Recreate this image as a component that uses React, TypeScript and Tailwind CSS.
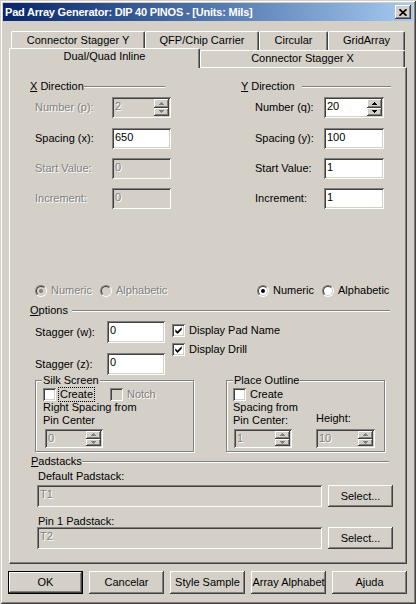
import { clsx } from 'clsx';

const raised = 'shadow-[inset_-1px_-1px_0_#404040,inset_1px_1px_0_#ffffff,inset_-2px_-2px_0_#808080]';
const sunken = 'shadow-[inset_1px_1px_0_#808080,inset_-1px_-1px_0_#ffffff,inset_2px_2px_0_#404040,inset_-2px_-2px_0_#d4d0c8]';
const etched = 'border border-[#808080] shadow-[inset_1px_1px_0_#ffffff,1px_1px_0_#ffffff]';
const grayText = 'text-[#808080] [text-shadow:1px_1px_0_#ffffff]';

function Arrow({ up, disabled }: { up?: boolean; disabled?: boolean }) {
  const fill = disabled ? '#808080' : '#000000';
  return (
    <svg width="5" height="3" viewBox="0 0 5 3" className="block" shapeRendering="crispEdges">
      {up ? (
        <>
          <rect x="2" y="0" width="1" height="1" fill={fill} />
          <rect x="1" y="1" width="3" height="1" fill={fill} />
          <rect x="0" y="2" width="5" height="1" fill={fill} />
        </>
      ) : (
        <>
          <rect x="0" y="0" width="5" height="1" fill={fill} />
          <rect x="1" y="1" width="3" height="1" fill={fill} />
          <rect x="2" y="2" width="1" height="1" fill={fill} />
        </>
      )}
    </svg>
  );
}

function Spin({ disabled }: { disabled?: boolean }) {
  return (
    <div className="mr-[2px] flex w-[15px] flex-col self-stretch py-[2px]">
      <div className={clsx('flex flex-1 items-center justify-center bg-[#d4d0c8]', raised)}>
        <Arrow up disabled={disabled} />
      </div>
      <div className={clsx('flex flex-1 items-center justify-center bg-[#d4d0c8]', raised)}>
        <Arrow disabled={disabled} />
      </div>
    </div>
  );
}

function TextBox({
  value,
  disabled,
  spin,
  className,
}: {
  value: string;
  disabled?: boolean;
  spin?: boolean;
  className: string;
}) {
  return (
    <div className={clsx('flex shrink-0', sunken, disabled ? 'bg-[#d4d0c8]' : 'bg-white', className)}>
      <span className={clsx('flex-1 pl-[3px] pt-[3px] leading-[13px]', disabled ? grayText : 'text-black')}>
        {value}
      </span>
      {spin && <Spin disabled={disabled} />}
    </div>
  );
}

function Check({ checked, disabled }: { checked?: boolean; disabled?: boolean }) {
  return (
    <span
      className={clsx(
        'flex h-[13px] w-[13px] shrink-0 items-center justify-center',
        sunken,
        disabled ? 'bg-[#d4d0c8]' : 'bg-white',
      )}
    >
      {checked && (
        <svg width="7" height="7" viewBox="0 0 7 7" className="block">
          <path d="M0.3 2.3 L2.5 4.5 L6.7 0.3 L6.7 2.8 L2.5 7 L0.3 4.8 Z" fill="#000000" />
        </svg>
      )}
    </span>
  );
}

function Radio({ checked, disabled }: { checked?: boolean; disabled?: boolean }) {
  return (
    <span className="flex h-[12px] w-[12px] shrink-0 rounded-full border border-t-[#808080] border-r-white border-b-white border-l-[#808080]">
      <span
        className={clsx(
          'flex flex-1 items-center justify-center rounded-full border border-t-[#404040] border-r-[#d4d0c8] border-b-[#d4d0c8] border-l-[#404040]',
          disabled ? 'bg-[#d4d0c8]' : 'bg-white',
        )}
      >
        {checked && <span className={clsx('h-[4px] w-[4px] rounded-full', disabled ? 'bg-[#808080]' : 'bg-black')} />}
      </span>
    </span>
  );
}

function Etch({ className }: { className?: string }) {
  return <div className={clsx('h-[2px] border-t border-b border-t-[#808080] border-b-white', className)} />;
}

function Btn({ label, className, def }: { label: string; className: string; def?: boolean }) {
  if (def) {
    return (
      <div className={clsx('flex border border-black', className)}>
        <div className={clsx('flex flex-1 items-center justify-center bg-[#d4d0c8]', raised)}>{label}</div>
      </div>
    );
  }
  return <div className={clsx('flex items-center justify-center bg-[#d4d0c8]', raised, className)}>{label}</div>;
}

function Tab({ label, className }: { label: string; className: string }) {
  return (
    <div
      className={clsx(
        'flex justify-center rounded-t-[2px] border-t border-r border-l border-t-white border-r-[#404040] border-l-white bg-[#d4d0c8] shadow-[inset_-1px_0_0_#808080]',
        className,
      )}
    >
      {label}
    </div>
  );
}

function Row({
  label,
  value,
  disabled,
  spin,
  labelClass,
  boxClass,
  className,
}: {
  label: string;
  value: string;
  disabled?: boolean;
  spin?: boolean;
  labelClass: string;
  boxClass: string;
  className?: string;
}) {
  return (
    <div className={clsx('flex items-center', className)}>
      <span className={clsx('leading-[13px]', labelClass, disabled && grayText)}>{label}</span>
      <TextBox value={value} disabled={disabled} spin={spin} className={boxClass} />
    </div>
  );
}

export default function App() {
  return (
    <div
      className={clsx(
        "flex h-[604px] w-[416px] flex-col bg-[#d4d0c8] p-[3px] font-['Liberation_Sans',Arial,sans-serif] text-[11px] text-black",
        'shadow-[inset_1px_1px_0_#d4d0c8,inset_-1px_-1px_0_#404040,inset_2px_2px_0_#ffffff,inset_-2px_-2px_0_#808080]',
      )}
    >
      {/* title bar */}
      <div className="flex h-[18px] items-center bg-linear-to-r from-[#0a246a] to-[#a6caf0] pl-[2px]">
        <span className="flex-1 font-bold tracking-[-0.2px] text-white">
          Pad Array Generator: DIP 40 PINOS - [Units: Mils]
        </span>
        <div className={clsx('mr-[2px] flex h-[14px] w-[16px] items-center justify-center bg-[#d4d0c8]', raised)}>
          <svg width="8" height="7" viewBox="0 0 8 7" className="block">
            <path d="M0.5 0.3 L7.5 6.7 M7.5 0.3 L0.5 6.7" stroke="#000000" strokeWidth="1.7" />
          </svg>
        </div>
      </div>

      {/* tabs */}
      <div className="mt-[10px] ml-[8px] flex h-[19px] leading-[13px]">
        <Tab label="Connector Stagger Y" className="w-[134px] pt-[2px]" />
        <Tab label="QFP/Chip Carrier" className="w-[114px] pt-[2px]" />
        <Tab label="Circular" className="w-[69px] pt-[2px]" />
        <Tab label="GridArray" className="w-[77px] pt-[2px]" />
      </div>
      <div className="relative ml-[6px] flex h-[17px] items-end leading-[13px]">
        <Tab label="Dual/Quad Inline" className="mb-[-1px] h-[20px] w-[191px] pt-[1px]" />
        <Tab label="Connector Stagger X" className="h-[17px] w-[205px] pt-[1px]" />
      </div>

      {/* panel */}
      <div className="ml-[6px] flex h-[497px] w-[398px] flex-col border-t border-r border-b border-l border-t-white border-r-[#404040] border-b-[#404040] border-l-white pt-[12px] pl-[20px] shadow-[inset_-1px_-1px_0_#808080]">
        {/* directions */}
        <div className="flex">
          <div className="flex w-[142px] flex-col">
            <div className="flex h-[13px] w-[135px] items-center leading-[13px]">
              <span>
                <u>X</u> Direction
              </span>
              <Etch className="flex-1" />
            </div>
            <Row label="Number (p):" value="2" disabled spin labelClass="ml-[5px] w-[77px]" boxClass="h-[21px] w-[59px]" className="mt-[4px]" />
            <Row label="Spacing (x):" value="650" labelClass="ml-[5px] w-[77px]" boxClass="h-[21px] w-[59px]" className="mt-[10px]" />
            <Row label="Start Value:" value="0" disabled labelClass="ml-[5px] w-[77px]" boxClass="h-[21px] w-[59px]" className="mt-[9px]" />
            <Row label="Increment:" value="0" disabled labelClass="ml-[5px] w-[77px]" boxClass="h-[21px] w-[59px]" className="mt-[9px]" />
          </div>
          <div className="ml-[69px] flex w-[150px] flex-col">
            <div className="flex h-[13px] items-center leading-[13px]">
              <span>
                <u>Y</u> Direction
              </span>
              <Etch className="ml-[7px] flex-1" />
            </div>
            <Row label="Number (q):" value="20" spin labelClass="ml-[14px] w-[69px]" boxClass="h-[21px] w-[60px]" className="mt-[4px]" />
            <Row label="Spacing (y):" value="100" labelClass="ml-[14px] w-[69px]" boxClass="h-[21px] w-[60px]" className="mt-[10px]" />
            <Row label="Start Value:" value="1" labelClass="ml-[14px] w-[69px]" boxClass="h-[21px] w-[60px]" className="mt-[9px]" />
            <Row label="Increment:" value="1" labelClass="ml-[14px] w-[69px]" boxClass="h-[21px] w-[60px]" className="mt-[9px]" />
          </div>
        </div>

        {/* numbering */}
        <div className="mt-[75px] flex h-[13px] items-center leading-[13px]">
          <div className="flex w-[227px] items-center">
            <div className="ml-[5px] flex w-[65px] items-center gap-[4px]">
              <Radio checked disabled />
              <span className={grayText}>Numeric</span>
            </div>
            <div className="flex items-center gap-[4px]">
              <Radio disabled />
              <span className={grayText}>Alphabetic</span>
            </div>
          </div>
          <div className="flex w-[65px] items-center gap-[4px]">
            <Radio checked />
            <span>Numeric</span>
          </div>
          <div className="flex items-center gap-[4px]">
            <Radio />
            <span>Alphabetic</span>
          </div>
        </div>

        {/* options */}
        <div className="mt-[7px] flex h-[13px] w-[360px] items-center leading-[13px]">
          <span>
            <u>O</u>ptions
          </span>
          <Etch className="ml-[4px] flex-1" />
        </div>
        <div className="mt-[4px] flex">
          <div className="ml-[5px] flex flex-col">
            <Row label="Stagger (w):" value="0" labelClass="w-[72px]" boxClass="h-[22px] w-[58px]" />
            <Row label="Stagger (z):" value="0" labelClass="w-[72px]" boxClass="h-[22px] w-[58px]" className="mt-[10px]" />
          </div>
          <div className="ml-[7px] flex flex-col leading-[13px]">
            <div className="mt-[3px] flex items-center gap-[4px]">
              <Check checked />
              <span>Display Pad Name</span>
            </div>
            <div className="mt-[6px] flex items-center gap-[4px]">
              <Check checked />
              <span>Display Drill</span>
            </div>
          </div>
        </div>

        {/* silk screen / place outline */}
        <div className="mt-[5px] flex leading-[13px]">
          <div className={clsx('relative ml-[5px] h-[72px] w-[159px] pt-[7px] pl-[7px]', etched)}>
            <span className="absolute -top-[7px] left-[6px] bg-[#d4d0c8] px-[1px]">Silk Screen</span>
            <div className="flex items-center">
              <div className="flex w-[67px] items-center gap-[3px]">
                <Check />
                <span className="px-[1px] outline-1 outline-black outline-dotted">Create</span>
              </div>
              <div className="flex items-center gap-[4px]">
                <Check disabled />
                <span className={grayText}>Notch</span>
              </div>
            </div>
            <div>Right Spacing from</div>
            <div>Pin Center</div>
            <TextBox value="0" disabled spin className="mt-[2px] ml-[2px] h-[19px] w-[58px]" />
          </div>

          <div className={clsx('relative ml-[32px] h-[72px] w-[159px] pt-[7px] pl-[6px]', etched)}>
            <span className="absolute -top-[7px] left-[6px] bg-[#d4d0c8] px-[1px]">Place Outline</span>
            <div className="flex items-center gap-[4px]">
              <Check />
              <span>Create</span>
            </div>
            <div className="flex">
              <div className="flex w-[83px] flex-col">
                <div>Spacing from</div>
                <div>Pin Center:</div>
                <TextBox value="1" disabled spin className="mt-[2px] ml-[1px] h-[19px] w-[58px]" />
              </div>
              <div className="flex flex-col">
                <div className="mt-[11px]">Height:</div>
                <TextBox value="10" disabled spin className="mt-[4px] h-[19px] w-[59px]" />
              </div>
            </div>
          </div>
        </div>

        {/* padstacks */}
        <div className="mt-[3px] ml-[1px] flex h-[13px] w-[358px] items-center leading-[13px]">
          <span>
            <u>P</u>adstacks
          </span>
          <Etch className="flex-1" />
        </div>
        <div className="mt-[2px] ml-[8px] leading-[13px]">Default Padstack:</div>
        <div className="mt-[2px] ml-[7px] flex">
          <TextBox value="T1" disabled className="h-[22px] w-[285px]" />
          <Btn label="Select..." className="ml-[6px] h-[22px] w-[65px]" />
        </div>
        <div className="mt-[8px] ml-[8px] leading-[13px]">Pin 1 Padstack:</div>
        <div className="mt-[-1px] ml-[7px] flex">
          <TextBox value="T2" disabled className="h-[22px] w-[285px]" />
          <Btn label="Select..." className="ml-[6px] h-[22px] w-[65px]" />
        </div>
      </div>

      {/* buttons */}
      <div className="mt-[7px] ml-[5px] flex gap-[6px]">
        <Btn label="OK" def className="h-[23px] w-[75px]" />
        <Btn label="Cancelar" className="h-[23px] w-[75px]" />
        <Btn label="Style Sample" className="h-[23px] w-[75px]" />
        <Btn label="Array Alphabet" className="h-[23px] w-[75px]" />
        <Btn label="Ajuda" className="h-[23px] w-[75px]" />
      </div>
    </div>
  );
}
